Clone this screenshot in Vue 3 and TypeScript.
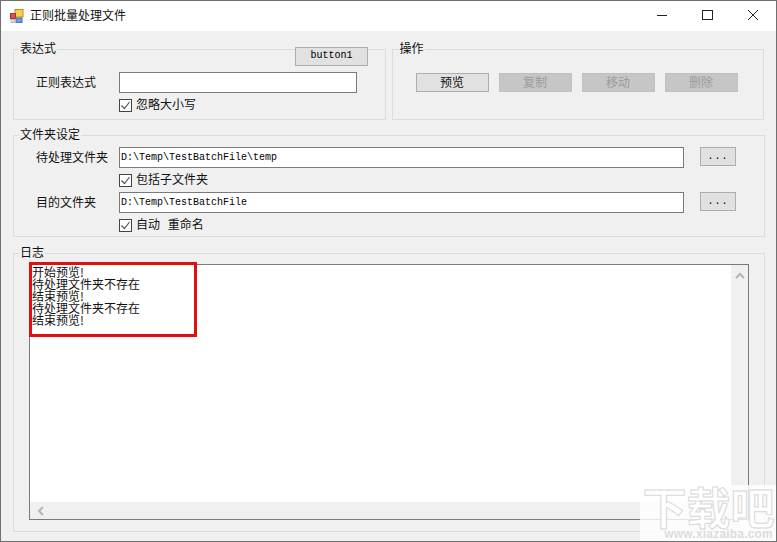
<script setup lang="ts">
const actions: { label: string; disabled: boolean }[] = [
  { label: '预览', disabled: false },
  { label: '复制', disabled: true },
  { label: '移动', disabled: true },
  { label: '删除', disabled: true },
]
const logLines: string[] = ['开始预览!', '待处理文件夹不存在', '结束预览!', '待处理文件夹不存在', '结束预览!']
</script>

<template>
  <div class="window">
    <header class="titlebar">
      <svg class="app-icon" width="14" height="14" viewBox="0 0 14 14">
        <rect x="5" y="0.5" width="8" height="7.5" fill="#f7cf4a" stroke="#b98a2a" />
        <rect x="0.5" y="4.5" width="5" height="5" fill="#d9534a" stroke="#a33" />
        <rect x="6" y="9" width="6" height="4.5" fill="#6f9fd8" stroke="#4a72a8" />
        <rect x="1" y="10.5" width="4" height="3" fill="#ddd" stroke="#bbb" />
      </svg>
      <span class="title">正则批量处理文件</span>
      <div class="controls">
        <svg width="12" height="12" viewBox="0 0 12 12" class="ctl ctl-min"><path d="M1 6.5h10" stroke="#222" fill="none" /></svg>
        <svg width="12" height="12" viewBox="0 0 12 12" class="ctl ctl-max"><rect x="1.5" y="1.5" width="10" height="9" stroke="#222" fill="none" /></svg>
        <svg width="12" height="12" viewBox="0 0 12 12" class="ctl ctl-close"><path d="M1 1l10 10M11 1L1 11" stroke="#222" fill="none" /></svg>
      </div>
    </header>

    <main class="content">
      <div class="top-row">
        <section class="group group-expr">
          <span class="legend">表达式</span>
          <button class="btn btn-float">button1</button>
          <div class="row">
            <label class="field-label">正则表达式</label>
            <input class="text-input input-short" type="text" />
          </div>
          <div class="check-row">
            <span class="check"><svg width="11" height="11" viewBox="0 0 11 11"><path d="M1.5 5.5l3 3 5-6.5" stroke="#555" stroke-width="1.2" fill="none" /></svg></span>
            <span class="check-text">忽略大小写</span>
          </div>
        </section>

        <section class="group group-actions">
          <span class="legend legend-actions">操作</span>
          <div class="action-row">
            <button v-for="a in actions" :key="a.label" class="btn action" :class="{ disabled: a.disabled }">{{ a.label }}</button>
          </div>
        </section>
      </div>

      <section class="group group-folders">
        <span class="legend">文件夹设定</span>
        <div class="row">
          <label class="field-label">待处理文件夹</label>
          <input class="text-input input-long" type="text" value="D:\Temp\TestBatchFile\temp" />
          <button class="btn browse">...</button>
        </div>
        <div class="check-row">
          <span class="check"><svg width="11" height="11" viewBox="0 0 11 11"><path d="M1.5 5.5l3 3 5-6.5" stroke="#555" stroke-width="1.2" fill="none" /></svg></span>
          <span class="check-text">包括子文件夹</span>
        </div>
        <div class="row row-second">
          <label class="field-label">目的文件夹</label>
          <input class="text-input input-long" type="text" value="D:\Temp\TestBatchFile" />
          <button class="btn browse">...</button>
        </div>
        <div class="check-row">
          <span class="check"><svg width="11" height="11" viewBox="0 0 11 11"><path d="M1.5 5.5l3 3 5-6.5" stroke="#555" stroke-width="1.2" fill="none" /></svg></span>
          <span class="check-text spaced">自动 重命名</span>
        </div>
      </section>

      <section class="group group-log">
        <span class="legend">日志</span>
        <div class="log">
          <div class="log-main">
            <div class="log-text">
              <div v-for="(line, i) in logLines" :key="i" class="log-line">{{ line }}</div>
            </div>
            <div class="vscroll">
              <svg width="10" height="7" viewBox="0 0 10 7"><path d="M1 6l4-4 4 4" stroke="#b4b4b4" stroke-width="2" fill="none" /></svg>
            </div>
          </div>
          <div class="hscroll">
            <svg width="7" height="10" viewBox="0 0 7 10"><path d="M6 1L2 5l4 4" stroke="#b4b4b4" stroke-width="2" fill="none" /></svg>
          </div>
          <div class="highlight"></div>
        </div>
      </section>
    </main>

    <div class="watermark">
      <div class="wm-logo">下载吧</div>
      <div class="wm-url">www.xiazaiba.com</div>
    </div>
  </div>
</template>

<style scoped>
.window {
  position: relative;
  width: 777px;
  height: 542px;
  box-sizing: border-box;
  border: 1px solid #707070;
  background: #f0f0f0;
  overflow: hidden;
  font-family: "Noto Sans CJK SC", "Liberation Sans", sans-serif;
  font-size: 12px;
  color: #111;
}
.titlebar {
  display: flex;
  align-items: center;
  height: 30px;
  background: #fff;
  padding-left: 9px;
}
.app-icon {
  margin-right: 6px;
}
.title {
  font-size: 12px;
  line-height: 28px;
  height: 30px;
}
.controls {
  margin-left: auto;
  display: flex;
  align-items: center;
  padding-right: 17px;
  margin-bottom: 2px;
}
.ctl-min {
  margin-right: 33px;
}
.ctl-max {
  margin-right: 34px;
}
.content {
  padding: 18px 12px 0;
}
.top-row {
  display: flex;
  gap: 6px;
  margin-bottom: 15px;
}
.group {
  position: relative;
  box-sizing: border-box;
  border: 1px solid #dcdcdc;
}
.legend {
  position: absolute;
  left: 5px;
  top: -9px;
  padding: 0 1px;
  background: #f0f0f0;
  line-height: 14px;
}
.legend-actions {
  left: 6px;
}
.group-expr,
.group-actions {
  width: 373px;
  height: 71px;
}
.group-expr {
  padding: 22px 0 0 22px;
}
.group-actions {
  padding-top: 23px;
}
.group-folders {
  width: 752px;
  height: 102px;
  padding: 11px 0 0 22px;
  margin-bottom: 16px;
}
.group-log {
  width: 752px;
  height: 279px;
  padding: 10px 15px;
}
.row {
  display: flex;
  align-items: flex-start;
}
.row-second {
  margin-top: 5px;
}
.field-label {
  width: 83px;
  flex: none;
  line-height: 19px;
}
.text-input {
  box-sizing: border-box;
  height: 21px;
  border: 1px solid #7a7a7a;
  background: #fff;
  padding: 0 0 0 1px;
  font-family: "Liberation Mono", monospace;
  font-size: 10px;
  color: #000;
  outline: none;
}
.input-short {
  width: 238px;
}
.input-long {
  width: 565px;
}
.check-row {
  display: flex;
  align-items: center;
  gap: 4px;
  margin: 5px 0 0 83px;
  height: 14px;
}
.check-text {
  line-height: 14px;
  height: 14px;
  margin-top: -3px;
}
.spaced {
  word-spacing: 5px;
}
.check {
  box-sizing: border-box;
  width: 13px;
  height: 13px;
  border: 1px solid #444;
  background: #fff;
  display: flex;
  align-items: center;
  justify-content: center;
}
.btn {
  box-sizing: border-box;
  border: 1px solid #adadad;
  background: #e1e1e1;
  padding: 0 0 2px;
  font-size: 12px;
  color: #111;
  font-family: "Noto Sans CJK SC", "Liberation Sans", sans-serif;
}
.btn-float {
  position: absolute;
  left: 281px;
  top: -3px;
  width: 73px;
  height: 19px;
  font-family: "Liberation Mono", monospace;
  font-size: 10px;
  line-height: 14px;
  color: #000;
}
.action-row {
  display: flex;
  gap: 10px;
  padding-left: 23px;
}
.action {
  width: 73px;
  height: 19px;
  line-height: 14px;
}
.action.disabled {
  background: #c6c6c6;
  border-color: #c0c0c0;
  color: #9c9c9c;
}
.browse {
  width: 36px;
  height: 19px;
  margin-left: 16px;
  font-family: "Liberation Mono", monospace;
  font-size: 10px;
  letter-spacing: 1px;
  line-height: 15px;
  color: #000;
  padding: 0;
}
.log {
  position: relative;
  box-sizing: border-box;
  height: 256px;
  border: 1px solid #7a7a7a;
  background: #fff;
  display: flex;
  flex-direction: column;
}
.log-main {
  flex: 1;
  display: flex;
  min-height: 0;
}
.log-text {
  flex: 1;
  padding: 1px 0 0 2px;
}
.log-line {
  height: 12px;
  line-height: 12px;
  font-size: 12px;
  white-space: nowrap;
}
.vscroll {
  width: 17px;
  background: #f0f0f0;
  display: flex;
  justify-content: center;
  padding-top: 7px;
  box-sizing: border-box;
}
.hscroll {
  height: 17px;
  background: #f0f0f0;
  display: flex;
  align-items: center;
  padding-left: 7px;
}
.highlight {
  position: absolute;
  left: -1px;
  top: -3px;
  width: 168px;
  height: 75px;
  box-sizing: border-box;
  border: 3px solid #e01010;
}
.watermark {
  position: absolute;
  right: -1px;
  bottom: -1px;
  width: 137px;
  height: 57px;
  background: rgba(255, 255, 255, 0.8);
  color: #fff;
  text-align: center;
}
.wm-logo {
  font-size: 44px;
  line-height: 42px;
  height: 42px;
  font-weight: 700;
  white-space: nowrap;
  -webkit-text-stroke: 1px #d8d8d8;
}
.wm-url {
  font-family: "Liberation Sans", sans-serif;
  font-size: 12px;
  line-height: 14px;
  font-weight: 700;
  text-align: right;
  padding-right: 4px;
  letter-spacing: 0.2px;
  color: #dcdcdc;
  white-space: nowrap;
}
</style>
